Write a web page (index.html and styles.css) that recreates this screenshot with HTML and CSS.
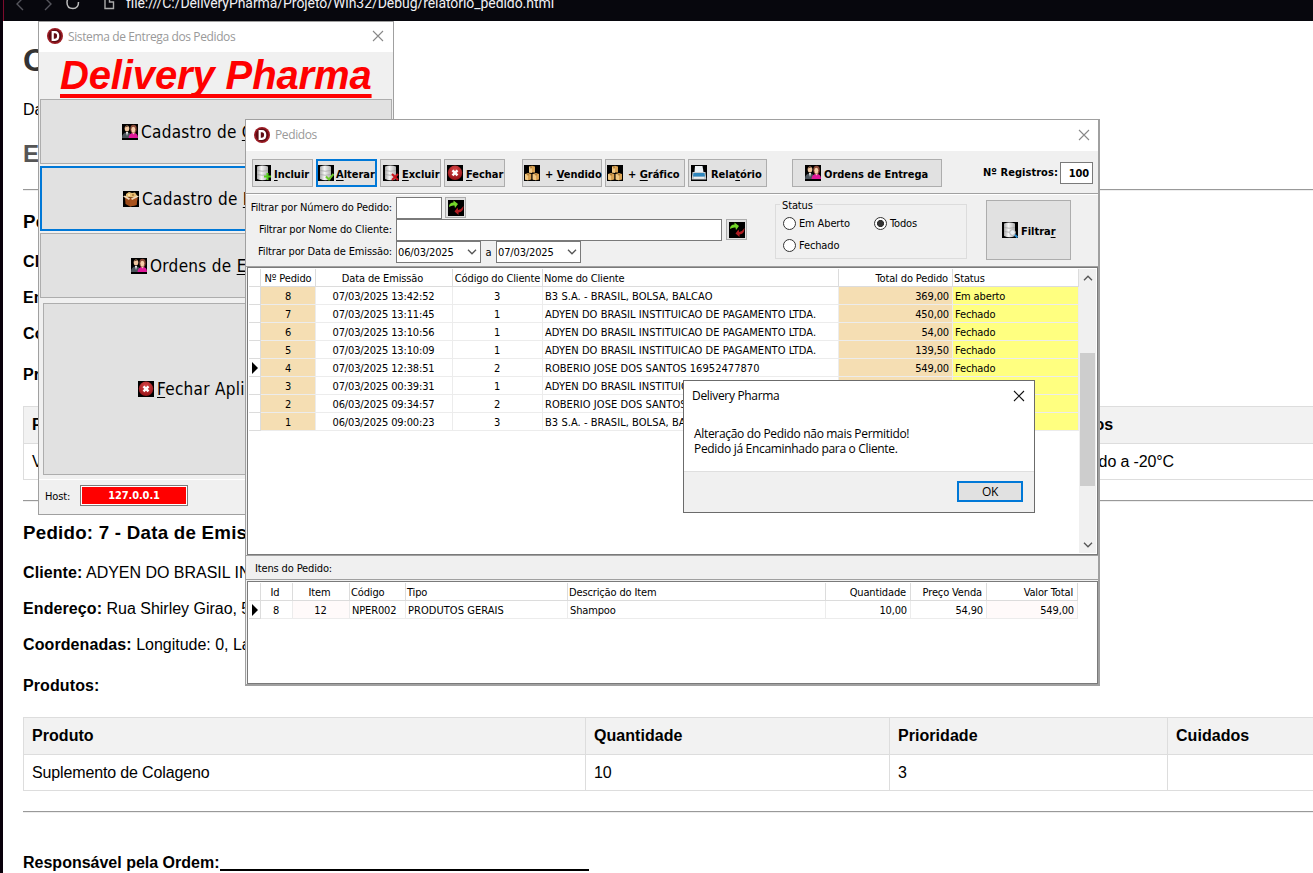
FILE: index.html
```
<!DOCTYPE html>
<html lang="pt-BR">
<head>
<meta charset="utf-8">
<title>Delivery Pharma</title>
<link rel="stylesheet" href="styles.css">
</head>
<body>
<svg class="defs" width="0" height="0" aria-hidden="true">
  <defs>
    <linearGradient id="metal" x1="0" x2="1" y1="0" y2="0"><stop offset="0" stop-color="#a8a8a8"/><stop offset=".4" stop-color="#f6f6f6"/><stop offset="1" stop-color="#b0b0b0"/></linearGradient>
    <radialGradient id="ruby" cx=".5" cy=".3" r=".8"><stop offset="0" stop-color="#d84848"/><stop offset="1" stop-color="#8e0a10"/></radialGradient>
  </defs>
  <symbol id="db" viewBox="0 0 16 16">
    <rect width="16" height="16" fill="#000"/>
    <path d="M2 1.500Q7.500-.5 13 1.500V14Q7.500 16.500 2 14Z" fill="url(#metal)"/>
    <path d="M2 5.500Q7.500 7 13 5.500M2 9.500Q7.500 11 13 9.500" fill="none" stroke="#a0a0a0" stroke-width=".7"/>
  </symbol>
  <symbol id="db-add" viewBox="0 0 16 16"><use href="#db"/><path d="M12.500 8v7M9 11.500h7" stroke="#55d01c" stroke-width="2"/></symbol>
  <symbol id="db-ok" viewBox="0 0 16 16"><use href="#db"/><path d="M8 11.500l3 3L15.500 9" fill="none" stroke="#6cc92a" stroke-width="2"/></symbol>
  <symbol id="db-del" viewBox="0 0 16 16"><use href="#db"/><path d="M9 9l6 6M15 9l-6 6" stroke="#c8141c" stroke-width="2"/></symbol>
  <symbol id="db-find" viewBox="0 0 16 16"><use href="#db"/><circle cx="10.500" cy="10.500" r="2.800" fill="#e8eef2" stroke="#b8b8b8"/><path d="M12.800 12.800l2.700 2.700" stroke="#2d8fd0" stroke-width="2"/></symbol>
  <symbol id="close" viewBox="0 0 16 16"><rect width="16" height="16" fill="#000"/><circle cx="8" cy="7.800" r="7.200" fill="url(#ruby)"/><path d="M5.500 5.300l5 5M10.500 5.300l-5 5" stroke="#fff" stroke-width="2.400"/></symbol>
  <symbol id="people" viewBox="0 0 16 16">
    <rect width="16" height="16" fill="#000"/>
    <ellipse cx="5" cy="4.500" rx="2.300" ry="3" fill="#f0c6a0"/><path d="M2.500 3.500Q5-.5 7.500 3.500L6 2.500Z" fill="#5a3a28"/>
    <path d="M0 14Q0 8.500 5 8.500T8.500 14Z" fill="#4b545c"/><path d="M4 8l1 4 1-4Z" fill="#fff"/>
    <ellipse cx="11.500" cy="5" rx="3.200" ry="4.200" fill="#8a4a38"/><ellipse cx="11.300" cy="5.500" rx="2" ry="2.700" fill="#f6cda8"/>
    <path d="M6.500 14Q7 9 11.500 9T16 14Z" fill="#e0189a"/><path d="M10 8.500h3l-1.500 2Z" fill="#f6cda8"/>
  </symbol>
  <symbol id="box" viewBox="0 0 16 16">
    <rect width="16" height="16" fill="#000"/>
    <path d="M3 6V3l3-2 3 1 3-.5 2 3V7Z" fill="#e6bd72"/><circle cx="6" cy="4" r="1" fill="#fff0c0"/><circle cx="10" cy="4" r="1" fill="#a87838"/>
    <path d="M2 6.500h12.500L13.500 14 7 15.500 2.500 13Z" fill="#9c4a18"/><path d="M7 8l7.500-1.500L13.500 14 7 15.500Z" fill="#a8521c"/>
    <path d="M0 5.500l2-1L7 7.500 6 9ZM16 5.500l-2-1-6 3L9 9Z" fill="#f0d8b8"/>
  </symbol>
  <symbol id="crates" viewBox="0 0 16 16">
    <rect width="16" height="16" fill="#000"/>
    <path d="M5 1.500l3-.8 3 .8v6H5ZM1 9l3-1 3.300 1v5.500L4 15.300 1 14.500ZM8.700 9L12 8l3 1v5.500l-3 .8-3.300-.8Z" fill="#d9a252"/>
    <path d="M5 1.500L8 3v5L5 7.500ZM1 9l3 1v5.300L1 14.500ZM8.700 9L12 10v5.300l-3.300-.8Z" fill="#f0c882"/>
    <path d="M7 1.500v2M4 9v1.500M12 9v1.500" stroke="#8a5a20"/>
  </symbol>
  <symbol id="printer" viewBox="0 0 16 16">
    <rect width="16" height="16" fill="#000"/><path d="M4 1h7.500l1 6H3.500Z" fill="#eef3f6"/>
    <path d="M1.500 7h13l.8 7.500H.7Z" fill="#c8ced2"/><path d="M2.500 8h11l.5 3.500H2Z" fill="#2d86bd"/><path d="M3 12.200h10v1.300H3Z" fill="#f7f7f7"/>
  </symbol>
  <symbol id="refresh" viewBox="0 0 16 16">
    <rect width="16" height="16" fill="#000"/>
    <path d="M1 7Q1 2.500 5.500 2.500V.5L10 4 7 8 6.500 5.500Q3.500 5 1 7Z" fill="#74d82a"/>
    <path d="M15.500 6Q15.500 12 10.500 12.500V15L6.500 11.500 9.500 7.500 10.200 10Q13.500 9.500 15.500 6Z" fill="#b01c22"/>
  </symbol>
  <symbol id="brand" viewBox="0 0 16 16"><circle cx="8" cy="8" r="8" fill="#9c1c24"/><circle cx="8" cy="8" r="6.400" fill="#5f0c14"/><path d="M5.700 4.200h2.300q3.200 0 3.200 3.800t-3.200 3.800H5.700Z" fill="none" stroke="#fff" stroke-width="2.200"/></symbol>
  <symbol id="x" viewBox="0 0 12 12"><path d="M1 1l10 10M11 1L1 11" fill="none" stroke="currentColor" stroke-width="1.100"/></symbol>
  <symbol id="chev" viewBox="0 0 10 6"><path d="M1 .8l4 4 4-4" fill="none" stroke="currentColor" stroke-width="1.300"/></symbol>
</svg>

<div class="desktop">
  <div class="browser">
    <header class="address-bar">
      <svg class="nav-icons" width="112" height="21" viewBox="0 0 112 21" fill="none">
        <path d="M19-2l-6 6 6 6M41-2l6 6-6 6" stroke="#55555c" stroke-width="1.400"/>
        <path d="M74.500 2q0 6.500-5.500 6.500-6 0-6-6 0-4 3-5" stroke="#bbb" stroke-width="1.500"/>
        <path d="M101-4v12.500h8.500V2h-4v-6" stroke="#aaa" stroke-width="1.400"/>
      </svg>
      <span class="url">file:///C:/DeliveryPharma/Projeto/Win32/Debug/relatorio_pedido.html</span>
    </header>
    <main class="report">
      <h1>Ordem</h1>
      <p class="date">Data</p>
      <h2>Entrega</h2>
      <hr>
      <section class="order">
        <h3>Pedido: 8</h3>
        <p><b>Cliente:</b></p>
        <p><b>Endereço:</b></p>
        <p><b>Coordenadas:</b></p>
        <p class="products"><b>Produtos:</b></p>
        <div class="ptable ptable-a">
          <b>Produto</b><b>Quantidade</b><b>Prioridade</b><b>Cuidados</b>
          <span>Vacina</span><span></span><span></span><span>Congelado a -20°C</span>
        </div>
      </section>
      <hr>
      <section class="order">
        <h3>Pedido: 7 - Data de Emissão</h3>
        <p><b>Cliente:</b> ADYEN DO BRASIL INST</p>
        <p><b>Endereço:</b> Rua Shirley Girao, 55</p>
        <p><b>Coordenadas:</b> Longitude: 0, Lat</p>
        <p class="products"><b>Produtos:</b></p>
        <div class="ptable ptable-b">
          <b>Produto</b><b>Quantidade</b><b>Prioridade</b><b>Cuidados</b>
          <span>Suplemento de Colageno</span><span>10</span><span>3</span><span></span>
        </div>
      </section>
      <hr>
      <div class="signature"><b>Responsável pela Ordem:</b><i></i></div>
    </main>
  </div>

  <section class="window menu-window">
    <header class="titlebar"><svg class="ico"><use href="#brand"/></svg><span>Sistema de Entrega dos Pedidos</span><svg class="win-x"><use href="#x"/></svg></header>
    <div class="logo"><span>Delivery Pharma</span></div>
    <div class="big-buttons">
      <button class="big b1"><svg class="ico"><use href="#people"/></svg><span>Cadastro de <u>C</u>lientes</span></button>
      <button class="big b2 focus"><svg class="ico"><use href="#box"/></svg><span>Cadastro de <u>P</u>rodutos</span></button>
      <button class="big b3"><svg class="ico"><use href="#people"/></svg><span>Ordens de <u>E</u>ntrega</span></button>
      <button class="big b4"><svg class="ico"><use href="#close"/></svg><span><u>F</u>echar Aplicativo</span></button>
    </div>
    <footer class="hostbar"><span>Host:</span><div class="host"><b>127.0.0.1</b></div></footer>
  </section>

  <section class="window orders-window">
    <header class="titlebar"><svg class="ico"><use href="#brand"/></svg><span>Pedidos</span><svg class="win-x"><use href="#x"/></svg></header>
    <div class="toolbar">
      <button class="tb"><svg class="ico"><use href="#db-add"/></svg><span><u>I</u>ncluir</span></button>
      <button class="tb focus"><svg class="ico"><use href="#db-ok"/></svg><span><u>A</u>lterar</span></button>
      <button class="tb"><svg class="ico"><use href="#db-del"/></svg><span><u>E</u>xcluir</span></button>
      <button class="tb"><svg class="ico"><use href="#close"/></svg><span><u>F</u>echar</span></button>
      <button class="tb mid gap"><svg class="ico"><use href="#crates"/></svg><span>+ <u>V</u>endido</span></button>
      <button class="tb mid"><svg class="ico"><use href="#crates"/></svg><span>+ <u>G</u>ráfico</span></button>
      <button class="tb mid report-btn"><svg class="ico"><use href="#printer"/></svg><span>Rela<u>t</u>ório</span></button>
      <button class="tb wide"><svg class="ico"><use href="#people"/></svg><span>Ordens de Entrega</span></button>
      <b class="reg-label">Nº Registros:</b><div class="field reg"><b>100</b></div>
    </div>
    <div class="filters">
      <div class="filter-rows">
        <div class="frow"><label>Filtrar por Número do Pedido:</label><div class="field num"></div><button class="mini"><svg class="ico"><use href="#refresh"/></svg></button></div>
        <div class="frow"><label>Filtrar por Nome do Cliente:</label><div class="field name"></div><button class="mini"><svg class="ico"><use href="#refresh"/></svg></button></div>
        <div class="frow"><label>Filtrar por Data de Emissão:</label><div class="field date-f"><span>06/03/2025</span><svg class="chev"><use href="#chev"/></svg></div><span class="to">a</span><div class="field date-f"><span>07/03/2025</span><svg class="chev"><use href="#chev"/></svg></div></div>
      </div>
      <fieldset class="status">
        <legend>Status</legend>
        <div class="radios">
          <span class="radio"><i></i>Em Aberto</span><span class="radio on"><i></i>Todos</span>
          <span class="radio"><i></i>Fechado</span>
        </div>
      </fieldset>
      <button class="tb filter-btn"><svg class="ico"><use href="#db-find"/></svg><span>Filtra<u>r</u></span></button>
    </div>

    <div class="grid-box main-grid">
      <div class="rows">
        <div class="row head"><span></span><span>Nº Pedido</span><span>Data de Emissão</span><span>Código do Cliente</span><span>Nome do Cliente</span><span>Total do Pedido</span><span>Status</span></div>
        <div class="row"><span></span><span>8</span><span>07/03/2025 13:42:52</span><span>3</span><span>B3 S.A. - BRASIL, BOLSA, BALCAO</span><span>369,00</span><span>Em aberto</span></div>
        <div class="row"><span></span><span>7</span><span>07/03/2025 13:11:45</span><span>1</span><span>ADYEN DO BRASIL INSTITUICAO DE PAGAMENTO LTDA.</span><span>450,00</span><span>Fechado</span></div>
        <div class="row"><span></span><span>6</span><span>07/03/2025 13:10:56</span><span>1</span><span>ADYEN DO BRASIL INSTITUICAO DE PAGAMENTO LTDA.</span><span>54,00</span><span>Fechado</span></div>
        <div class="row"><span></span><span>5</span><span>07/03/2025 13:10:09</span><span>1</span><span>ADYEN DO BRASIL INSTITUICAO DE PAGAMENTO LTDA.</span><span>139,50</span><span>Fechado</span></div>
        <div class="row current"><span></span><span>4</span><span>07/03/2025 12:38:51</span><span>2</span><span>ROBERIO JOSE DOS SANTOS 16952477870</span><span>549,00</span><span>Fechado</span></div>
        <div class="row"><span></span><span>3</span><span>07/03/2025 00:39:31</span><span>1</span><span>ADYEN DO BRASIL INSTITUIC</span><span></span><span></span></div>
        <div class="row"><span></span><span>2</span><span>06/03/2025 09:34:57</span><span>2</span><span>ROBERIO JOSE DOS SANTOS</span><span></span><span></span></div>
        <div class="row"><span></span><span>1</span><span>06/03/2025 09:00:23</span><span>3</span><span>B3 S.A. - BRASIL, BOLSA, BAL</span><span></span><span></span></div>
      </div>
      <div class="scrollbar"><svg class="chev up"><use href="#chev"/></svg><i class="thumb"></i><svg class="chev"><use href="#chev"/></svg></div>
    </div>
    <div class="items-title">Itens do Pedido:</div>
    <div class="grid-box items-grid">
      <div class="rows">
        <div class="row head"><span></span><span>Id</span><span>Item</span><span>Código</span><span>Tipo</span><span>Descrição do Item</span><span>Quantidade</span><span>Preço Venda</span><span>Valor Total</span></div>
        <div class="row current"><span></span><span>8</span><span>12</span><span>NPER002</span><span>PRODUTOS GERAIS</span><span>Shampoo</span><span>10,00</span><span>54,90</span><span>549,00</span></div>
      </div>
    </div>
  </section>

  <section class="dialog">
    <header><span>Delivery Pharma</span><svg class="win-x"><use href="#x"/></svg></header>
    <div class="message">Alteração do Pedido não mais Permitido!<br>Pedido já Encaminhado para o Cliente.</div>
    <footer><button class="ok">OK</button></footer>
  </section>
</div>
</body>
</html>
```
FILE: styles.css
```
* { box-sizing: border-box; }
body { margin: 0; overflow: hidden; }
.defs { display: block; height: 0; }
svg { flex: none; }
b, u, h1, h2, h3, p { margin: 0; }
button { font: inherit; color: inherit; letter-spacing: inherit; margin: 0; padding: 0; }
u { text-underline-offset: 2px; }

.desktop { position: relative; width: 1313px; height: 873px; overflow: hidden; background: #fff; }
.ico { width: 16px; height: 16px; display: block; }

/* Browser with the printed report */
.browser { height: 873px; border-left: 3px solid #08000a; font: 16px "Liberation Sans", Arial, sans-serif; color: #000; }
.address-bar { height: 21px; background: #07070d; border-left: 1px solid #7c0c2c; display: flex; }
.nav-icons { display: block; }
.url { color: #f0f0f4; font: 14px/18px Roboto, sans-serif; margin: -6px 0 0 10px; white-space: nowrap; letter-spacing: -.06px; }
.report { padding: 21px 0 0 20px; width: 1500px; }
.report h1 { font-size: 32px; line-height: 36px; color: #333; }
.report .date { margin-top: 21px; line-height: 20px; padding-top: 1px; margin-bottom: -1px; }
.report h2 { margin-top: 21px; font-size: 24px; line-height: 28px; color: #555; }
.report hr { margin: 21px 0 0; height: 2px; border: 0; border-top: 1px solid #999; border-bottom: 1px solid #eee; }
.order h3 { margin-top: 18px; padding-top: 1px; margin-bottom: -1px; font-size: 18.72px; line-height: 24px; letter-spacing: .25px; white-space: nowrap; }
.order p { margin-top: 16px; padding-top: 1px; margin-bottom: -1px; line-height: 20px; white-space: nowrap; letter-spacing: -.02px; }
.order p b { letter-spacing: .1px; }
.order h3 + p { margin-top: 18px; }
.order .products { margin-top: 21px; }
.ptable { margin-top: 22px; display: grid; grid-template-rows: 37px 36px; border-left: 1px solid #ddd; border-top: 1px solid #ddd; }
.ptable-a { grid-template-columns: 431px 310px 267px 400px; }
.ptable-b { grid-template-columns: 562px 304px 278px 340px; }
.ptable > * { border-right: 1px solid #ddd; border-bottom: 1px solid #ddd; padding-left: 8px; line-height: 35px; white-space: nowrap; }
.ptable > b { background: #f2f2f2; letter-spacing: .05px; }
.ptable > span { letter-spacing: -.14px; }
.order + hr { margin-top: 20px; }
.signature { display: flex; margin-top: 39px; line-height: 22px; }
.signature i { width: 369px; height: 19px; border-bottom: 2px solid #000; }

/* Windows */
.window { position: absolute; background: #f0f0f0; border: 1px solid #a0a0a0; font: 11px "DejaVu Sans Condensed", "DejaVu Sans", Tahoma, sans-serif; font-stretch: condensed; color: #000; letter-spacing: -.14px; display: flex; flex-direction: column; white-space: nowrap; }
.titlebar { height: 30px; background: #fff; display: flex; align-items: center; flex: none; padding: 0 9px 2px 8px; color: #999; font: 12px "Open Sans", sans-serif; letter-spacing: -.38px; }
.titlebar span { margin-left: 5px; flex: 1; }
.win-x { width: 12px; height: 12px; color: #888; }
.window button { background: #e1e1e1; border: 1px solid #adadad; display: flex; align-items: center; }
.window button.focus { border: 2px solid #0078d7; }

.menu-window { left: 38px; top: 21px; width: 356px; height: 494px; }
.logo { height: 47px; padding-left: 21px; }
.logo span { color: #f00; font: italic bold 40px/46px "Liberation Sans", Arial, sans-serif; text-decoration: underline; text-decoration-thickness: 4px; text-underline-offset: 5px; text-decoration-skip-ink: none; letter-spacing: -.13px; }
.big-buttons { padding: 0 1px; display: flex; flex-direction: column; gap: 2px; }
.window .big { height: 65px; font-size: 17px; letter-spacing: .3px; padding-left: 81px; }
.big span { margin-left: 3px; }
.window .b3 { padding-left: 90px; }
.window .b4 { height: 172px; margin: 3px 3px 0; padding-left: 94px; }
.hostbar { margin-top: 4px; border-top: 1px solid #fff; flex: 1; display: flex; padding: 5px 0 0 6px; }
.hostbar > span { line-height: 24px; width: 35px; }
.host { width: 108px; height: 21px; border: 1px solid #7a7a7a; background: #f00; outline: 1px solid #fff; outline-offset: -2px; color: #fff; text-align: center; line-height: 20px; letter-spacing: -.1px; }

.orders-window { left: 245px; top: 119px; width: 855px; height: 567px; border-right: 2px solid #a0a0a0; border-bottom: 2px solid #a0a0a0; }
.orders-window .titlebar { height: 31px; padding-right: 8px; }
.toolbar { height: 43px; border-bottom: 1px solid #a0a0a0; display: flex; padding: 8px 0 0 6px; gap: 3px; flex: none; font-weight: bold; }
.window .tb { height: 28px; width: 61px; padding-left: 2px; letter-spacing: -.03px; font-weight: bold; flex: none; }
.window .tb.focus { padding-left: 0; }
.tb span { margin-left: 3px; padding-top: 2px; }
.tb.focus span { margin-left: 2px; }
.window .tb.mid { width: 80px; padding-left: 1px; }
.tb.mid span { margin-left: 5px; }
.window .tb.gap { margin-left: 14px; width: 80px; }
.window .tb.report-btn { width: 79px; padding-left: 2px; }
.tb.report-btn span { margin-left: 4px; }
.window .tb.wide { width: 150px; margin-left: 22px; padding-left: 12px; }
.reg-label { width: 74px; margin-left: 38px; line-height: 28px; letter-spacing: .05px; }
.field { background: #fff; border: 1px solid #7a7a7a; height: 22px; }
.reg { width: 33px; margin-top: 3px; line-height: 21px; text-align: right; padding-right: 3px; }
.filters { height: 73px; border-top: 1px solid #fff; border-bottom: 1px solid #a0a0a0; display: flex; flex: none; padding-top: 2px; }
.filter-rows { width: 528px; }
.frow { display: flex; height: 22px; }
.frow label { width: 146px; text-align: right; line-height: 22px; margin-right: 4px; }
.num { width: 46px; margin-right: 3px; }
.name { width: 326px; margin-right: 4px; }
.window .mini { width: 21px; height: 21px; padding-left: 2px; }
.date-f { width: 85px; display: flex; align-items: center; padding: 0 3px 0 1px; }
.date-f span { flex: 1; }
.chev { width: 10px; height: 6px; color: #555; }
.to { width: 15px; text-align: center; line-height: 24px; }
.status { border: 1px solid #dcdcdc; width: 192px; height: 55px; margin: 7px 19px 0 1px; padding: 0; position: relative; min-width: 0; }
.status legend { position: absolute; left: 4px; top: -6px; background: #f0f0f0; padding: 0 2px; }
.radios { display: grid; grid-template-columns: 91px 80px; grid-auto-rows: 22px; padding: 7px 0 0 7px; }
.radio { display: flex; align-items: center; gap: 3px; }
.radio i { width: 13px; height: 13px; border: 1px solid #333; border-radius: 50%; background: #fff; }
.radio.on i { background: radial-gradient(circle, #333 3.300px, #fff 3.800px); }
.window .filter-btn { width: 85px; height: 60px; margin-top: 3px; padding-left: 15px; }

.grid-box { background: #fff; border: 1px solid #7a7a7a; margin: 0 0 0 1px; display: flex; padding: 1px; flex: none; }
.main-grid { height: 288px; width: 851px; }
.rows { flex: 1; }
.row { display: grid; height: 18px; line-height: 19px; }
.main-grid .row { grid-template-columns: 12px 55px 137px 90px 296px 114px 126px; }
.items-grid .row { grid-template-columns: 12px 32px 57px 56px 162px 258px 85px 76px 91px; }
.row span { height: 18px; border-right: 1px solid #ececec; border-bottom: 1px solid #ececec; padding: 0 3px 0 2px; overflow: hidden; }
.row.head span { border-color: #dcdcdc; padding: 0 4px 0 1px; }
.row span:first-child { border-color: #dcdcdc; padding: 0; display: flex; align-items: center; justify-content: flex-end; }
.row.current span:first-child::after { content: ""; border-left: 6px solid #000; border-top: 6px solid transparent; border-bottom: 6px solid transparent; margin-right: 2px; }
.row span:nth-child(2), .row span:nth-child(3) { text-align: center; }
.main-grid .row span:nth-child(2), .row.head span:nth-child(4) { padding: 0 1px; }
.main-grid .row span:nth-child(4) { text-align: center; }
.main-grid .row:not(.head) span:nth-child(5), .items-grid .row:not(.head) span:nth-child(5) { letter-spacing: .05px; }
.main-grid .row span:nth-child(6) { text-align: right; }
.main-grid .row:not(.head) span:nth-child(2), .main-grid .row:not(.head) span:nth-child(6) { background: #f5deb3; }
.main-grid .row:not(.head) span:nth-child(7) { background: #ffff80; }
.scrollbar { width: 17px; background: #f0f0f0; display: flex; flex-direction: column; align-items: center; padding: 6px 0 5px; }
.scrollbar .up { transform: rotate(180deg); }
.thumb { width: 15px; height: 133px; background: #cdcdcd; margin: 72px 0 auto; }
.items-title { height: 25px; border-top: 1px solid #a0a0a0; border-bottom: 1px solid #a0a0a0; line-height: 25px; padding-left: 9px; flex: none; }
.items-grid { margin-top: 1px; height: 103px; width: 851px; }
.items-grid .row span:nth-child(n+7) { text-align: right; }
.items-grid .row:not(.head) span:nth-child(3), .items-grid .row:not(.head) span:nth-child(9) { background: #fffafa; }

.dialog { position: absolute; left: 683px; top: 380px; width: 352px; height: 133px; background: #fff; border: 1px solid #6b6b6b; font: 12px/15px "Open Sans", sans-serif; color: #000; letter-spacing: -.32px; display: flex; flex-direction: column; }
.dialog header { height: 30px; display: flex; align-items: center; padding: 0 9px 1px 8px; }
.dialog header span { flex: 1; }
.dialog .win-x { color: #111; }
.message { padding: 15px 0 0 10px; flex: 1; white-space: nowrap; }
.dialog footer { height: 41px; background: #f0f0f0; border-top: 1px solid #dfdfdf; padding: 9px 11px; display: flex; justify-content: flex-end; }
.ok { width: 66px; height: 21px; background: #e1e1e1; border: 2px solid #0078d7; }
```
